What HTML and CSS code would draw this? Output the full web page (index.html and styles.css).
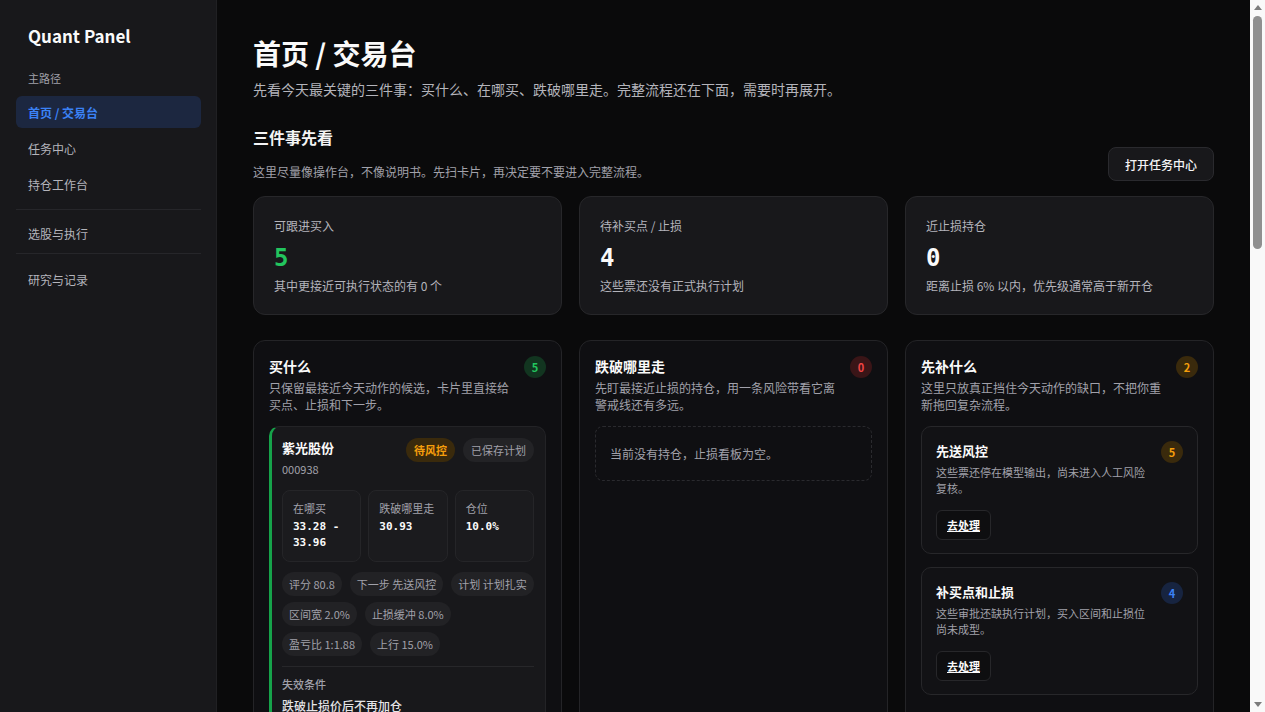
FILE: index.html
```html
<!DOCTYPE html>
<html lang="zh-CN">
<head>
  <meta charset="UTF-8" />
  <meta name="viewport" content="width=device-width, initial-scale=1" />
  <title>Quant Panel</title>
  <link rel="stylesheet" href="styles.css">
</head>
<body>
  <div class="app">
    <aside class="sidebar">
      <div class="brand">Quant Panel</div>
      <div class="nav-label">主路径</div>
      <nav class="nav">
        <a class="nav-item active" href="#">首页 / 交易台</a>
        <a class="nav-item" href="#">任务中心</a>
        <a class="nav-item" href="#">持仓工作台</a>
      </nav>
      <div class="nav-sep"></div>
      <nav class="nav">
        <a class="nav-item" href="#">选股与执行</a>
      </nav>
      <div class="nav-sep tight"></div>
      <nav class="nav">
        <a class="nav-item" href="#">研究与记录</a>
      </nav>
    </aside>

    <main class="main">
      <h1 class="page-title">首页 / 交易台</h1>
      <p class="page-sub">先看今天最关键的三件事：买什么、在哪买、跌破哪里走。完整流程还在下面，需要时再展开。</p>

      <div class="section-head">
        <div>
          <h2 class="section-title">三件事先看</h2>
          <p class="section-sub">这里尽量像操作台，不像说明书。先扫卡片，再决定要不要进入完整流程。</p>
        </div>
        <button class="btn">打开任务中心</button>
      </div>

      <div class="stats">
        <div class="stat">
          <div class="stat-label">可跟进买入</div>
          <div class="stat-num green">5</div>
          <div class="stat-sub">其中更接近可执行状态的有 0 个</div>
        </div>
        <div class="stat">
          <div class="stat-label">待补买点 / 止损</div>
          <div class="stat-num">4</div>
          <div class="stat-sub">这些票还没有正式执行计划</div>
        </div>
        <div class="stat">
          <div class="stat-label">近止损持仓</div>
          <div class="stat-num">0</div>
          <div class="stat-sub">距离止损 6% 以内，优先级通常高于新开仓</div>
        </div>
      </div>

      <div class="columns">
        <section class="panel">
          <div class="panel-head">
            <div>
              <h3 class="panel-title">买什么</h3>
              <p class="panel-desc">只保留最接近今天动作的候选，卡片里直接给买点、止损和下一步。</p>
            </div>
            <span class="badge badge-green">5</span>
          </div>

          <div class="cand">
            <div class="cand-head">
              <div>
                <div class="cand-name">紫光股份</div>
                <div class="cand-code">000938</div>
              </div>
              <div class="pills">
                <span class="pill pill-amber">待风控</span>
                <span class="pill">已保存计划</span>
              </div>
            </div>
            <div class="boxes">
              <div class="box"><div class="box-label">在哪买</div><div class="box-val">33.28 - 33.96</div></div>
              <div class="box"><div class="box-label">跌破哪里走</div><div class="box-val">30.93</div></div>
              <div class="box"><div class="box-label">仓位</div><div class="box-val">10.0%</div></div>
            </div>
            <div class="chips">
              <span class="chip">评分 80.8</span>
              <span class="chip">下一步 先送风控</span>
              <span class="chip">计划 计划扎实</span>
              <span class="chip">区间宽 2.0%</span>
              <span class="chip">止损缓冲 8.0%</span>
              <span class="chip">盈亏比 1:1.88</span>
              <span class="chip">上行 15.0%</span>
            </div>
            <div class="cand-foot">
              <div class="foot-label">失效条件</div>
              <div class="foot-text">跌破止损价后不再加仓</div>
            </div>
          </div>

          <div class="cand">
            <div class="cand-head">
              <div>
                <div class="cand-name">中际旭创</div>
                <div class="cand-code">300308</div>
              </div>
              <div class="pills">
                <span class="pill pill-amber">待风控</span>
                <span class="pill">已保存计划</span>
              </div>
            </div>
            <div class="boxes">
              <div class="box"><div class="box-label">在哪买</div><div class="box-val">141.20 - 144.05</div></div>
              <div class="box"><div class="box-label">跌破哪里走</div><div class="box-val">131.30</div></div>
              <div class="box"><div class="box-label">仓位</div><div class="box-val">8.0%</div></div>
            </div>
            <div class="chips">
              <span class="chip">评分 78.4</span>
              <span class="chip">下一步 先送风控</span>
              <span class="chip">计划 计划扎实</span>
              <span class="chip">区间宽 2.0%</span>
              <span class="chip">止损缓冲 7.0%</span>
              <span class="chip">盈亏比 1:2.10</span>
              <span class="chip">上行 14.7%</span>
            </div>
            <div class="cand-foot">
              <div class="foot-label">失效条件</div>
              <div class="foot-text">跌破止损价后不再加仓</div>
            </div>
          </div>

          <div class="cand">
            <div class="cand-head">
              <div>
                <div class="cand-name">浪潮信息</div>
                <div class="cand-code">000977</div>
              </div>
              <div class="pills">
                <span class="pill pill-amber">待风控</span>
                <span class="pill">已保存计划</span>
              </div>
            </div>
            <div class="boxes">
              <div class="box"><div class="box-label">在哪买</div><div class="box-val">45.10 - 46.02</div></div>
              <div class="box"><div class="box-label">跌破哪里走</div><div class="box-val">41.95</div></div>
              <div class="box"><div class="box-label">仓位</div><div class="box-val">8.0%</div></div>
            </div>
            <div class="chips">
              <span class="chip">评分 76.2</span>
              <span class="chip">下一步 先送风控</span>
              <span class="chip">计划 计划扎实</span>
              <span class="chip">区间宽 2.0%</span>
              <span class="chip">止损缓冲 7.0%</span>
              <span class="chip">盈亏比 1:1.75</span>
              <span class="chip">上行 12.3%</span>
            </div>
            <div class="cand-foot">
              <div class="foot-label">失效条件</div>
              <div class="foot-text">跌破止损价后不再加仓</div>
            </div>
          </div>

          <div class="cand">
            <div class="cand-head">
              <div>
                <div class="cand-name">工业富联</div>
                <div class="cand-code">601138</div>
              </div>
              <div class="pills">
                <span class="pill pill-amber">待风控</span>
                <span class="pill">已保存计划</span>
              </div>
            </div>
            <div class="boxes">
              <div class="box"><div class="box-label">在哪买</div><div class="box-val">24.60 - 25.10</div></div>
              <div class="box"><div class="box-label">跌破哪里走</div><div class="box-val">22.88</div></div>
              <div class="box"><div class="box-label">仓位</div><div class="box-val">6.0%</div></div>
            </div>
            <div class="chips">
              <span class="chip">评分 74.9</span>
              <span class="chip">下一步 先送风控</span>
              <span class="chip">计划 计划扎实</span>
              <span class="chip">区间宽 2.0%</span>
              <span class="chip">止损缓冲 7.0%</span>
              <span class="chip">盈亏比 1:1.60</span>
              <span class="chip">上行 11.2%</span>
            </div>
            <div class="cand-foot">
              <div class="foot-label">失效条件</div>
              <div class="foot-text">跌破止损价后不再加仓</div>
            </div>
          </div>

          <div class="cand">
            <div class="cand-head">
              <div>
                <div class="cand-name">中科曙光</div>
                <div class="cand-code">603019</div>
              </div>
              <div class="pills">
                <span class="pill pill-amber">待风控</span>
                <span class="pill">已保存计划</span>
              </div>
            </div>
            <div class="boxes">
              <div class="box"><div class="box-label">在哪买</div><div class="box-val">62.40 - 63.65</div></div>
              <div class="box"><div class="box-label">跌破哪里走</div><div class="box-val">58.03</div></div>
              <div class="box"><div class="box-label">仓位</div><div class="box-val">6.0%</div></div>
            </div>
            <div class="chips">
              <span class="chip">评分 73.5</span>
              <span class="chip">下一步 先送风控</span>
              <span class="chip">计划 计划扎实</span>
              <span class="chip">区间宽 2.0%</span>
              <span class="chip">止损缓冲 7.0%</span>
              <span class="chip">盈亏比 1:1.52</span>
              <span class="chip">上行 10.6%</span>
            </div>
            <div class="cand-foot">
              <div class="foot-label">失效条件</div>
              <div class="foot-text">跌破止损价后不再加仓</div>
            </div>
          </div>
        </section>

        <section class="panel">
          <div class="panel-head">
            <div>
              <h3 class="panel-title">跌破哪里走</h3>
              <p class="panel-desc">先盯最接近止损的持仓，用一条风险带看它离警戒线还有多远。</p>
            </div>
            <span class="badge badge-red">0</span>
          </div>
          <div class="empty">当前没有持仓，止损看板为空。</div>
        </section>

        <section class="panel">
          <div class="panel-head">
            <div>
              <h3 class="panel-title">先补什么</h3>
              <p class="panel-desc">这里只放真正挡住今天动作的缺口，不把你重新拖回复杂流程。</p>
            </div>
            <span class="badge badge-amber">2</span>
          </div>

          <div class="task">
            <div class="task-head">
              <div>
                <h4 class="task-title">先送风控</h4>
                <p class="task-desc">这些票还停在模型输出，尚未进入人工风险复核。</p>
              </div>
              <span class="badge badge-amber">5</span>
            </div>
            <a class="task-btn" href="#">去处理</a>
          </div>

          <div class="task">
            <div class="task-head">
              <div>
                <h4 class="task-title">补买点和止损</h4>
                <p class="task-desc">这些审批还缺执行计划，买入区间和止损位尚未成型。</p>
              </div>
              <span class="badge badge-blue">4</span>
            </div>
            <a class="task-btn" href="#">去处理</a>
          </div>
        </section>
      </div>
    </main>
  </div>

  <!-- page scrollbar as the browser draws it -->
  <div class="scrollbar" aria-hidden="true">
    <span class="sb-arrow up"></span>
    <span class="sb-thumb"></span>
    <span class="sb-arrow down"></span>
  </div>
</body>
</html>
```

FILE: styles.css
```css
* {
  box-sizing: border-box;
}
body {
  margin: 0;
  padding-right: 15px;
  background: #0a0a0b;
  color: #f4f4f5;
  font-family: "Noto Sans CJK SC", "Noto Sans", sans-serif;
}
h1, h2, h3, h4, p {
  margin: 0;
}
.app {
  display: flex;
  align-items: stretch;
  min-height: 100vh;
}

/* sidebar */
.sidebar {
  width: 217px;
  flex-shrink: 0;
  background: #18181b;
  border-right: 1px solid #202023;
  padding: 24px 15px 24px 16px;
}
.brand {
  font-size: 17px;
  font-weight: 700;
  line-height: 24px;
  padding: 0 12px;
  color: #fafafa;
}
.nav-label {
  margin-top: 22px;
  margin-bottom: 10px;
  padding: 0 12px;
  font-size: 11px;
  line-height: 16px;
  color: #a1a1aa;
}
.nav {
  display: flex;
  flex-direction: column;
  gap: 4px;
}
.nav-item {
  display: flex;
  align-items: center;
  height: 32px;
  padding: 0 12px;
  border-radius: 6px;
  font-size: 12px;
  color: #b4b4bb;
  text-decoration: none;
}
.nav-item.active {
  background: #1c2740;
  color: #3b82f6;
  font-weight: 700;
}
.nav-sep {
  height: 1px;
  background: #26262a;
  margin: 9px 0 7px;
}
.nav-sep.tight {
  margin-top: 4px;
  margin-bottom: 9px;
}

/* main */
.main {
  flex: 1;
  min-width: 0;
  padding: 36px 36px 80px;
}
.page-title {
  font-size: 28px;
  line-height: 34px;
  font-weight: 700;
  color: #fafafa;
}
.page-sub {
  margin-top: 9px;
  font-size: 14px;
  line-height: 20px;
  color: #b4b4bb;
}
.section-head {
  margin-top: 27px;
  display: flex;
  justify-content: space-between;
  align-items: flex-end;
}
.section-title {
  font-size: 16px;
  line-height: 22px;
  font-weight: 700;
}
.section-sub {
  margin-top: 15px;
  font-size: 12px;
  line-height: 18px;
  color: #a1a1aa;
}
.btn {
  height: 34px;
  padding: 0 16px;
  border: 1px solid #2a2a2e;
  border-radius: 8px;
  background: #18181b;
  color: #f4f4f5;
  font-family: inherit;
  font-size: 12px;
  font-weight: 500;
}

.stats {
  margin-top: 15px;
  display: grid;
  grid-template-columns: repeat(3, 1fr);
  gap: 17px;
}
.stat {
  background: #18181b;
  border: 1px solid #27272a;
  border-radius: 12px;
  padding: 20px;
}
.stat-label {
  font-size: 12px;
  line-height: 17px;
  color: #b4b4bb;
}
.stat-num {
  margin-top: 9px;
  font-family: "DejaVu Sans Mono", monospace;
  font-size: 24px;
  line-height: 30px;
  font-weight: 700;
  color: #fafafa;
}
.stat-num.green {
  color: #22c55e;
}
.stat-sub {
  margin-top: 4px;
  font-size: 12px;
  line-height: 17px;
  color: #b4b4bb;
}

/* columns */
.columns {
  margin-top: 25px;
  display: grid;
  grid-template-columns: repeat(3, 1fr);
  gap: 17px;
  align-items: stretch;
}
.panel {
  background: #0f0f12;
  border: 1px solid #242427;
  border-radius: 12px;
  padding: 15px 15px 16px;
}
.panel-head, .task-head {
  display: flex;
  justify-content: space-between;
  align-items: flex-start;
  gap: 12px;
}
.panel-title {
  font-size: 14px;
  line-height: 20px;
  font-weight: 700;
  color: #fafafa;
}
.panel-desc {
  margin-top: 3px;
  font-size: 12px;
  line-height: 17px;
  color: #a1a1aa;
}
.badge {
  flex-shrink: 0;
  width: 22px;
  height: 22px;
  border-radius: 50%;
  display: flex;
  align-items: center;
  justify-content: center;
  font-size: 11px;
  font-weight: 700;
}
.badge-green { background: #123520; color: #22c55e; }
.badge-red { background: #3a1517; color: #ef4444; }
.badge-amber { background: #3a2a0c; color: #f59e0b; }
.badge-blue { background: #172440; color: #3b82f6; }

/* candidate card */
.cand {
  margin-top: 13px;
  background: #18181b;
  border: 1px solid #232326;
  border-left: 3px solid #16a34a;
  border-radius: 10px;
  padding: 11px 11px 12px 10px;
}
.cand + .cand {
  margin-top: 10px;
}
.cand-head {
  display: flex;
  justify-content: space-between;
  align-items: flex-start;
}
.cand-name {
  font-size: 13px;
  line-height: 20px;
  font-weight: 700;
  color: #fafafa;
}
.cand-code {
  margin-top: 2px;
  font-size: 11px;
  line-height: 18px;
  color: #a1a1aa;
}
.pills {
  display: flex;
  gap: 8px;
}
.pill {
  height: 24px;
  padding: 0 8px;
  border-radius: 12px;
  background: #232326;
  color: #a1a1aa;
  font-size: 11px;
  display: flex;
  align-items: center;
}
.pill-amber {
  background: #3a2a0c;
  color: #f59e0b;
  font-weight: 700;
}
.boxes {
  margin-top: 12px;
  display: grid;
  grid-template-columns: repeat(3, 1fr);
  gap: 7px;
}
.box {
  background: #1b1b1e;
  border: 1px solid #252528;
  border-radius: 8px;
  padding: 10px;
}
.box-label {
  font-size: 11px;
  line-height: 14px;
  color: #a1a1aa;
}
.box-val {
  margin-top: 4px;
  font-family: "DejaVu Sans Mono", monospace;
  font-size: 11px;
  line-height: 16px;
  font-weight: 700;
  color: #fafafa;
}
.chips {
  margin-top: 10px;
  display: flex;
  flex-wrap: wrap;
  gap: 6px 8px;
}
.chip {
  height: 24px;
  padding: 0 7px;
  border-radius: 12px;
  background: #222225;
  color: #a1a1aa;
  font-size: 11px;
  display: flex;
  align-items: center;
}
.cand-foot {
  margin-top: 10px;
  padding-top: 9px;
  border-top: 1px solid #27272a;
}
.foot-label {
  font-size: 11px;
  line-height: 16px;
  font-weight: 500;
  color: #a1a1aa;
}
.foot-text {
  margin-top: 6px;
  font-size: 12px;
  line-height: 16px;
  font-weight: 500;
  color: #e4e4e7;
}

/* empty */
.empty {
  margin-top: 13px;
  border: 1px dashed #2a2a2e;
  border-radius: 8px;
  padding: 18px 14px;
  font-size: 12px;
  line-height: 17px;
  color: #a1a1aa;
}

/* task card */
.task {
  margin-top: 13px;
  background: #121215;
  border: 1px solid #27272a;
  border-radius: 10px;
  padding: 14px 14px 13px;
}
.task + .task {
  margin-top: 13px;
}
.task-title {
  font-size: 13px;
  line-height: 20px;
  font-weight: 700;
  color: #fafafa;
}
.task-desc {
  margin-top: 3px;
  font-size: 11px;
  line-height: 16px;
  color: #a1a1aa;
}
.task-btn {
  margin-top: 14px;
  display: inline-flex;
  align-items: center;
  height: 30px;
  padding: 0 10px;
  border: 1px solid #27272a;
  border-radius: 6px;
  background: #0e0e10;
  color: #fafafa;
  font-size: 11px;
  font-weight: 700;
  text-decoration: underline;
}

/* scrollbar strip */
.scrollbar {
  position: fixed;
  top: 0;
  right: 0;
  width: 15px;
  height: 100vh;
  background: #f9f9f9;
  display: flex;
  flex-direction: column;
  align-items: center;
}
.sb-arrow {
  width: 0;
  height: 0;
  border-left: 4px solid transparent;
  border-right: 4px solid transparent;
}
.sb-arrow.up {
  margin-top: 5px;
  border-bottom: 5px solid #7c7c7c;
}
.sb-arrow.down {
  margin-top: auto;
  margin-bottom: 5px;
  border-top: 5px solid #7c7c7c;
}
.sb-thumb {
  margin-top: 6px;
  width: 9px;
  height: 233px;
  border-radius: 5px;
  background: #8f8f8f;
}
```
